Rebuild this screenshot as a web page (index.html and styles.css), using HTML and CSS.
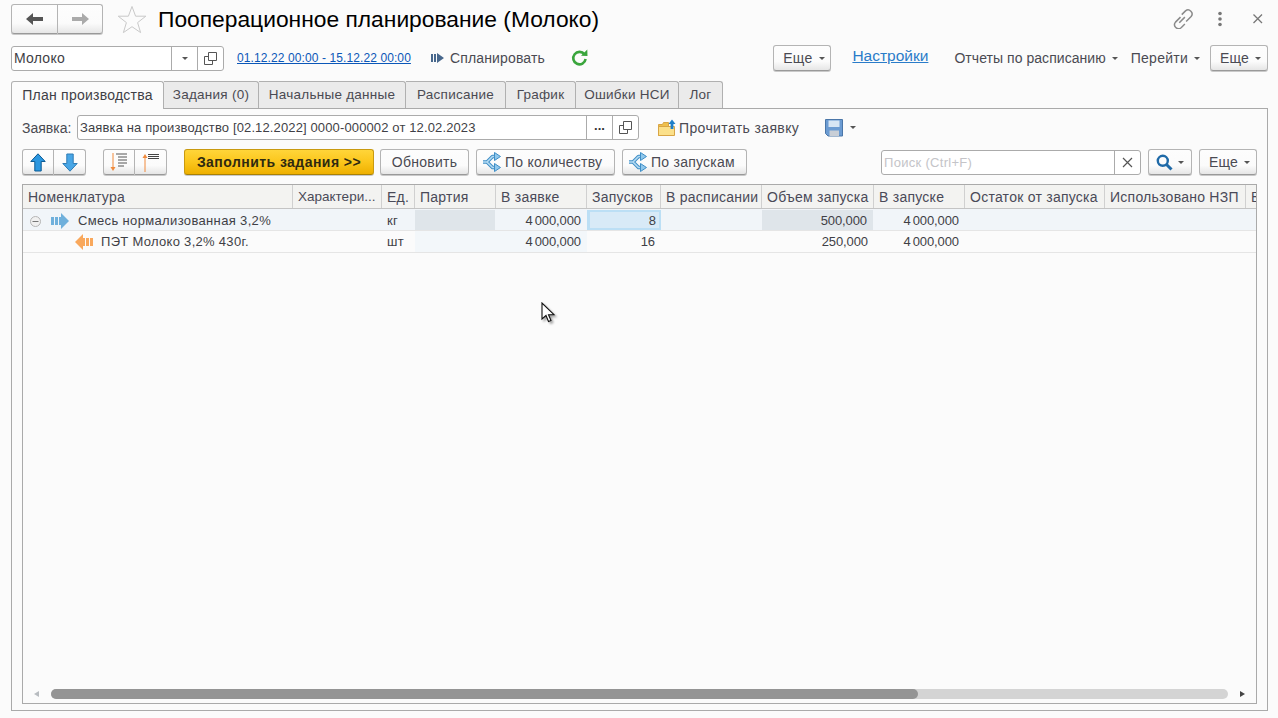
FILE: index.html
```html
<!DOCTYPE html>
<html lang="ru">
<head>
<meta charset="utf-8">
<title>Пооперационное планирование (Молоко)</title>
<link rel="stylesheet" href="styles.css">
</head>
<body>
<div class="page">
  <header class="titlebar">
    <div class="btn-group nav-group">
      <button class="btn nav-btn nav-back"><svg width="18" height="14" viewBox="0 0 18 14"><path d="M0 7 7 1v4h10v4H7v4z" fill="#555"/></svg></button>
      <button class="btn nav-btn nav-next"><svg width="18" height="14" viewBox="0 0 18 14"><path d="M18 7 11 1v4H1v4h10v4z" fill="#aaa"/></svg></button>
    </div>
    <svg class="star" width="30" height="29" viewBox="0 0 30 29"><path d="M15 1.500 18.600 11.200 28.800 11.200 20.600 17.600 23.600 27.600 15 21.700 6.400 27.600 9.400 17.600 1.200 11.200 11.400 11.200z" fill="none" stroke="#c9c9c9"/></svg>
    <h1 class="title">Пооперационное планирование (Молоко)</h1>
    <div class="window-tools">
      <svg width="20" height="20" viewBox="3 3 16 16" fill="none" stroke="#8a8a8a" stroke-width="1.200"><path d="M9 9.500 5 13.500a3.200 3.200 0 0 0 4.500 4.500l3-3"/><path d="M8 14 12.500 9.500"/><path d="M10 7.500 13 4.500a3.200 3.200 0 0 1 4.500 4.500L13.500 13"/></svg>
      <svg class="dots" width="6" height="16" viewBox="0 0 6 16"><g fill="#777"><circle cx="3" cy="2.500" r="1.800"/><circle cx="3" cy="8" r="1.800"/><circle cx="3" cy="13.500" r="1.800"/></g></svg>
      <svg class="close" width="12" height="12" viewBox="0 0 12 12"><path d="M1.500 1.500l8.500 8.500M10 1.500 1.500 10" stroke="#777" stroke-width="1.300"/></svg>
    </div>
  </header>

  <div class="commandbar">
    <div class="field plan-field">
      <span class="field-text">Молоко</span>
      <span class="field-btn combo-btn"><i class="caret"></i></span>
      <span class="field-btn"><svg class="copy" width="13" height="13" viewBox="0 0 13 13"><use href="#copy-icon"/></svg></span>
    </div>
    <a class="period-link">01.12.22 00:00 - 15.12.22 00:00</a>
    <span class="cmd plan-cmd"><svg width="14" height="12" viewBox="0 0 14 12"><path d="M0 2h2v8H0zM3 2h2v8H3zM6 1l0 10 7-5z" fill="#47678c"/></svg>Спланировать</span>
    <svg class="refresh" width="17" height="18" viewBox="0 0 17 18"><path d="M13.500 5.500A6.200 6.200 0 1 0 14.600 10" fill="none" stroke="#3aa53c" stroke-width="2.600"/><path d="M10 6.800 16.500 7 16.300 .6z" fill="#3aa53c"/></svg>
    <div class="command-right">
      <button class="btn more-btn">Еще<i class="caret"></i></button>
      <a class="settings-link">Настройки</a>
      <span class="cmd reports-cmd">Отчеты по расписанию<i class="caret"></i></span>
      <span class="cmd goto-cmd">Перейти<i class="caret"></i></span>
      <button class="btn more-btn more-last">Еще<i class="caret"></i></button>
    </div>
  </div>

  <nav class="tabs">
    <span class="tab active w1">План производства</span>
    <span class="tab w2">Задания (0)</span>
    <span class="tab w3">Начальные данные</span>
    <span class="tab w4">Расписание</span>
    <span class="tab w5">График</span>
    <span class="tab w6">Ошибки НСИ</span>
    <span class="tab w7">Лог</span>
  </nav>

  <main class="panel">
    <div class="order-row">
      <label class="order-label">Заявка:</label>
      <div class="field order-field">
        <span class="field-text">Заявка на производство [02.12.2022] 0000-000002 от 12.02.2023</span>
        <span class="field-btn dots-btn">...</span>
        <span class="field-btn"><svg class="copy" width="13" height="13" viewBox="0 0 13 13"><use href="#copy-icon"/></svg></span>
      </div>
      <span class="cmd read-cmd"><svg width="18" height="18" viewBox="0 0 18 18"><path d="M.5 5.500h4l1-2h5v13H.5z" fill="#eec04e" stroke="#d8a545"/><path d="M.5 7.500h16v9H.5z" fill="#fbe08a" stroke="#d8a545"/><path d="M14 .5l3.500 4.500H15.400v5h-2.800V5H10.500z" fill="#1f7fc9"/></svg>Прочитать заявку</span>
      <span class="save-cmd"><svg width="18" height="18" viewBox="0 0 18 18"><path d="M.5 .5h17v16.500H3L.5 14.500z" fill="#6b9bd2" stroke="#4a76a8"/><path d="M3.500 1.500h11v6.500h-11z" fill="#d6e5f4"/><path d="M4.500 11.500h9.500v5.500H4.500z" fill="#c8ced6"/></svg><i class="caret"></i></span>
    </div>

    <div class="toolbar">
      <div class="btn-group">
        <button class="btn icon-btn"><svg width="16" height="19" viewBox="0 0 16 19"><path d="M8 .8 15.200 8.500h-4V18H4.800V8.500h-4z" fill="#2b97e0" stroke="#0b5a95"/></svg></button>
        <button class="btn icon-btn"><svg width="16" height="19" viewBox="0 0 16 19"><path d="M8 18.200 15.200 10.500h-4V1H4.800v9.500h-4z" fill="#48a6e6" stroke="#2f7cb5"/></svg></button>
      </div>
      <div class="btn-group sort-group">
        <button class="btn icon-btn"><svg width="18" height="19" viewBox="0 0 18 19"><path d="M3 0v16" stroke="#f08a3c"/><path d="M.5 14 3 18l2.500-4z" fill="#f08a3c"/><path d="M6 1h11M8 4h9M8 7h9M8 10h9M8 13h6" stroke="#555"/></svg></button>
        <button class="btn icon-btn"><svg width="18" height="19" viewBox="0 0 18 19"><path d="M3 3v16" stroke="#f08a3c"/><path d="M.5 5 3 1l2.500 4z" fill="#f08a3c"/><path d="M6 1.500h11M6 3.500h11M6 5.500h11" stroke="#444"/></svg></button>
      </div>
      <button class="btn fill-btn">Заполнить задания &gt;&gt;</button>
      <button class="btn text-btn refresh-btn">Обновить</button>
      <button class="btn text-btn icon-text-btn qty-btn"><svg width="18" height="20" viewBox="0 0 18 20"><use href="#route-icon"/></svg>По количеству</button>
      <button class="btn text-btn icon-text-btn runs-btn"><svg width="18" height="20" viewBox="0 0 18 20"><use href="#route-icon"/></svg>По запускам</button>
      <div class="field search-field">
        <span class="field-text search-hint">Поиск (Ctrl+F)</span>
        <span class="field-btn clear-btn"><svg width="11" height="11" viewBox="0 0 11 11"><path d="M1 1l9 9M10 1l-9 9" stroke="#555" stroke-width="1.200"/></svg></span>
      </div>
      <button class="btn find-btn"><svg width="17" height="17" viewBox="0 0 17 17"><circle cx="6.800" cy="6.800" r="5" fill="none" stroke="#1f6aa8" stroke-width="2.400"/><path d="M10.500 10.500 15.500 15.500" stroke="#1f6aa8" stroke-width="3"/></svg><i class="caret"></i></button>
      <button class="btn more-btn table-more">Еще<i class="caret"></i></button>
    </div>

    <section class="grid">
      <div class="row head">
        <span class="cell">Номенклатура</span><span class="cell tight">Характери...</span><span class="cell">Ед.</span><span class="cell">Партия</span><span class="cell">В заявке</span><span class="cell">Запусков</span><span class="cell">В расписании</span><span class="cell">Объем запуска</span><span class="cell">В запуске</span><span class="cell">Остаток от запуска</span><span class="cell">Использовано НЗП</span><span class="cell cut">В</span>
      </div>
      <div class="row parent">
        <span class="cell name"><svg class="tree" width="13" height="13" viewBox="0 0 13 13"><circle cx="6.500" cy="6.500" r="5" fill="#f0f0f0" stroke="#b5b5b5"/><path d="M3.500 6.500h6" stroke="#777"/></svg><svg class="arrow" width="18" height="16" viewBox="0 0 18 16"><path d="M0 4h3v8H0zM4 4h3v8H4z" fill="#6fb0dc"/><path d="M8 4h2V0l8 8-8 8v-4H8z" fill="#6fb0dc"/></svg>Смесь нормализованная 3,2%</span>
        <span class="cell"></span><span class="cell">кг</span><span class="cell shaded"></span><span class="cell num">4 000,000</span><span class="cell num current">8</span><span class="cell"></span><span class="cell num shaded">500,000</span><span class="cell num">4 000,000</span><span class="cell"></span><span class="cell"></span><span class="cell"></span>
      </div>
      <div class="row child">
        <span class="cell name child-name"><svg class="arrow" width="18" height="16" viewBox="0 0 18 16"><path d="M10 4H8V0L0 8l8 8v-4h2z M11 4h3v8h-3z M15 4h3v8h-3z" fill="#f9a85c"/></svg>ПЭТ Молоко 3,2% 430г.</span>
        <span class="cell"></span><span class="cell">шт</span><span class="cell tint"></span><span class="cell num tint">4 000,000</span><span class="cell num">16</span><span class="cell"></span><span class="cell num">250,000</span><span class="cell num">4 000,000</span><span class="cell"></span><span class="cell"></span><span class="cell"></span>
      </div>
      <div class="grid-body"></div>
      <div class="scrollbar">
        <i class="sc-left"></i>
        <div class="sc-track"><div class="sc-thumb" style="width:73.700%"></div></div>
        <i class="sc-right"></i>
      </div>
    </section>
  </main>
</div>

<svg class="cursor" width="16" height="22" viewBox="0 0 16 22"><path d="M1 1v16l4-3.500 2.500 6 2.500-1-2.500-5.800H13z" fill="#fff" stroke="#111" stroke-width="1.100"/></svg>

<svg class="defs" width="0" height="0">
  <defs>
    <g id="copy-icon" fill="none" stroke="#555"><path d="M4.500 .5h8v8h-8z"/><path d="M4.500 4.500h-4v8h8v-4"/></g>
    <g id="route-icon">
      <path d="M0 10h4L9.500 4.500H12M4 10l5.500 5.500H12" fill="none" stroke="#3f8ec6" stroke-width="3.600" stroke-linejoin="round"/>
      <path d="M0 10h4L9.500 4.500H12M4 10l5.500 5.500H12" fill="none" stroke="#b6dcf4" stroke-width="1.600" stroke-linejoin="round"/>
      <path d="M11.500 .5 17.500 4.500 11.500 8.500zM11.500 11.500 17.500 15.500 11.500 19.500z" fill="#8fc7ec" stroke="#3f8ec6" stroke-linejoin="round"/>
    </g>
  </defs>
</svg>
</body>
</html>
```

FILE: styles.css
```css
* { box-sizing: border-box; }
html, body { margin: 0; height: 100%; overflow: hidden; }
body {
  background: #fbfbfb;
  color: #4a4a52;
  font: 14px/16px "Liberation Sans", Arial, sans-serif;
  letter-spacing: .25px;
}
.page { width: 1278px; height: 718px; padding: 4px 10px 0 11px; }
.defs { display: block; height: 0; }

/* buttons */
.btn {
  display: inline-flex;
  align-items: center;
  justify-content: center;
  height: 26px;
  padding: 0;
  border: 1px solid #b4b4b4;
  border-bottom-color: #999;
  border-radius: 3px;
  background: linear-gradient(#fdfdfd 0, #fbfbfb 65%, #e6e6e6 100%);
  box-shadow: 0 1px 0 #c9c9c9;
  color: #4a4a52;
  font: inherit;
  letter-spacing: inherit;
}
.btn-group { display: flex; flex: none; }
.btn-group .btn:first-child { border-radius: 3px 0 0 3px; }
.btn-group .btn:last-child { border-radius: 0 3px 3px 0; border-left: 0; }
.caret {
  display: inline-block;
  width: 0;
  height: 0;
  border: 3px solid transparent;
  border-top: 3px solid #555;
  border-bottom: 0;
  vertical-align: middle;
}

/* title */
.titlebar { display: flex; align-items: center; height: 30px; }
.nav-group { width: 92px; }
.nav-btn { height: 30px; }
.nav-back { width: 47px; }
.nav-next { width: 45px; }
.star { flex: none; margin-left: 14px; }
.title {
  margin: 0 0 0 11px;
  color: #000;
  font-size: 22.800px;
  font-weight: 400;
  line-height: 30px;
  letter-spacing: 0;
}
.window-tools { display: flex; align-items: center; margin-left: auto; padding-right: 4px; }
.dots { margin-left: 24px; }
.close { margin-left: 29px; }

/* command bar */
.commandbar { display: flex; align-items: center; height: 26px; margin-top: 11px; }
.command-right { display: flex; align-items: center; margin-left: auto; }
.field {
  display: flex;
  align-items: stretch;
  height: 25px;
  border: 1px solid #ababab;
  border-radius: 3px;
  background: #fff;
  flex: none;
}
.field-text { flex: 1; padding-left: 2px; line-height: 23px; color: #3f3f46; white-space: nowrap; overflow: hidden; }
.field-btn {
  display: flex;
  align-items: center;
  justify-content: center;
  width: 26px;
  border-left: 1px solid #ababab;
  flex: none;
  color: #333;
}
.plan-field { width: 213px; }
.period-link { margin-left: 13px; color: #0b57b8; text-decoration: underline; font-size: 12px; letter-spacing: .1px; }
.cmd { display: inline-flex; align-items: center; white-space: nowrap; }
.cmd .caret { margin-left: 6px; }
.plan-cmd { margin-left: 20px; letter-spacing: .15px; }
.plan-cmd svg { margin-right: 5px; }
.refresh { flex: none; margin-left: 26px; }
.more-btn { width: 58px; flex: none; padding-left: 3px; }
.more-btn .caret { margin-left: 6px; }
.settings-link { margin-bottom: 4px; margin-left: 21px; color: #2a7cc9; text-decoration: underline; font-size: 15.500px; letter-spacing: 0; }
.reports-cmd { margin-left: 26px; letter-spacing: .05px; }
.goto-cmd { margin-left: 13px; }
.more-last { margin-left: 10px; }

/* tabs */
.tabs { display: flex; height: 27px; margin-top: 10px; }
.tab {
  height: 27px;
  padding-top: 5px;
  border: 1px solid #b0b0b0;
  border-left: 0;
  border-bottom: 0;
  border-radius: 0 3px 0 0;
  background: #ebebeb;
  font-size: 13.500px;
  text-align: center;
  white-space: nowrap;
}
.tab.active {
  position: relative;
  z-index: 1;
  height: 28px;
  border-left: 1px solid #b0b0b0;
  border-radius: 3px 3px 0 0;
  background: #fbfbfb;
  color: #3f3f46;
  font-size: 14px;
}
.w1 { width: 153px; }
.w2 { width: 95px; }
.w3 { width: 147px; }
.w4 { width: 100px; }
.w5 { width: 70px; }
.w6 { width: 103px; }
.w7 { width: 44px; }

/* panel */
.panel {
  width: 1257px;
  height: 603px;
  padding: 6px 10px 6px 10px;
  border: 1px solid #aaa;
}
.order-row { display: flex; align-items: center; height: 25px; }
.order-label { width: 55px; flex: none; letter-spacing: 0; }
.order-field { width: 562px; height: 25px; font-size: 13px; letter-spacing: .13px; }
.read-cmd { margin-left: 19px; letter-spacing: .37px; }
.read-cmd svg { margin-right: 3px; }
.save-cmd { display: inline-flex; align-items: center; margin-left: 26px; }
.save-cmd .caret { margin-left: 7px; }
.dots-btn { font-weight: 700; letter-spacing: 0; padding-bottom: 4px; }

.toolbar { display: flex; align-items: center; height: 26px; margin-top: 9px; }
.icon-btn { width: 32px; }
.sort-group { margin-left: 17px; }
.fill-btn {
  width: 190px;
  margin-left: 17px;
  flex: none;
  border-color: #c99a10;
  border-bottom-color: #a98105;
  background: linear-gradient(#ffd53a 0, #fbc61c 50%, #eeb000 100%);
  color: #2f2a10;
  font-weight: 700;
  letter-spacing: .45px;
}
.text-btn { flex: none; gap: 4px; }
.icon-text-btn { justify-content: flex-start; padding-left: 6px; }
.refresh-btn { width: 89px; margin-left: 6px; }
.qty-btn { width: 139px; margin-left: 7px; }
.runs-btn { width: 125px; margin-left: 7px; }
.search-field { width: 260px; margin-left: 134px; font-size: 13px; letter-spacing: .3px; }
.search-hint { color: #c4c4c8; }
.find-btn { width: 44px; margin-left: 7px; flex: none; gap: 5px; }
.table-more { margin-left: 7px; }

/* grid */
.grid {
  display: flex;
  flex-direction: column;
  width: 1235px;
  height: 520px;
  margin-top: 9px;
  border: 1px solid #aaa;
  overflow: hidden;
}
.row {
  display: grid;
  grid-template-columns: 270px 89px 33px 81px 91px 74px 101px 112px 91px 140px 141px 10px;
  flex: none;
}
.cell {
  display: block;
  overflow: hidden;
  padding: 0 5px;
  white-space: nowrap;
  color: #3f3f46;
}
.cut { overflow: visible; }
.head { height: 24px; border-bottom: 1px solid #c4c4c4; background: #f3f3f1; }
.head .cell { height: 23px; padding-top: 4px; border-right: 1px solid #d0d0d0; color: #4a4a58; }
.head .cell:last-child { border-right: 0; }
.head .tight { font-size: 13.500px; letter-spacing: 0; }
.parent { height: 22px; padding-top: 1px; border-bottom: 1px solid #e5e5e5; background: #f1f5f9; }
.parent .cell { height: 20px; padding-top: 3px; font-size: 13px; }
.child { height: 22px; border-bottom: 1px solid #e5e5e5; }
.child .cell { height: 21px; padding-top: 3px; font-size: 13px; }
.child .name { padding-top: 0; letter-spacing: .3px; }
.parent .name { padding-top: 2px; }
.name { display: flex; align-items: center; letter-spacing: .35px; }
.num { padding-right: 6px; text-align: right; letter-spacing: -.1px; word-spacing: -1.500px; }
.shaded { background: #dfe5ea; margin-right: 1px; }
.tint { background: #f3f7fa; }
.parent .current { border: 2px solid #bcdff5; border-left-width: 3px; background: #d8eaf7; padding: 1px 3px 0 5px; }
.tree { margin-left: 1px; margin-right: 9px; flex: none; }
.arrow { flex: none; margin-right: 9px; }
.child-name .arrow { margin-right: 8px; }
.child-name { padding-left: 52px; }
.grid-body { flex: 1; }
.scrollbar { display: flex; align-items: center; height: 10px; margin-bottom: 4px; padding: 0 11px; flex: none; }
.sc-left, .sc-right { width: 0; height: 0; border: 3px solid transparent; flex: none; }
.sc-left { border-right: 5px solid #b8bcc0; border-left: 0; }
.sc-right { border-left: 5px solid #444; border-right: 0; }
.sc-track { flex: 1; height: 10px; margin: 0 12px 0 12px; border-radius: 5px; background: #d4d4d4; }
.sc-thumb { height: 10px; border-radius: 5px; background: #949494; }

.cursor { position: absolute; left: 541px; top: 302px; filter: drop-shadow(2px 2px 1px rgba(0, 0, 0, .35)); }
```
